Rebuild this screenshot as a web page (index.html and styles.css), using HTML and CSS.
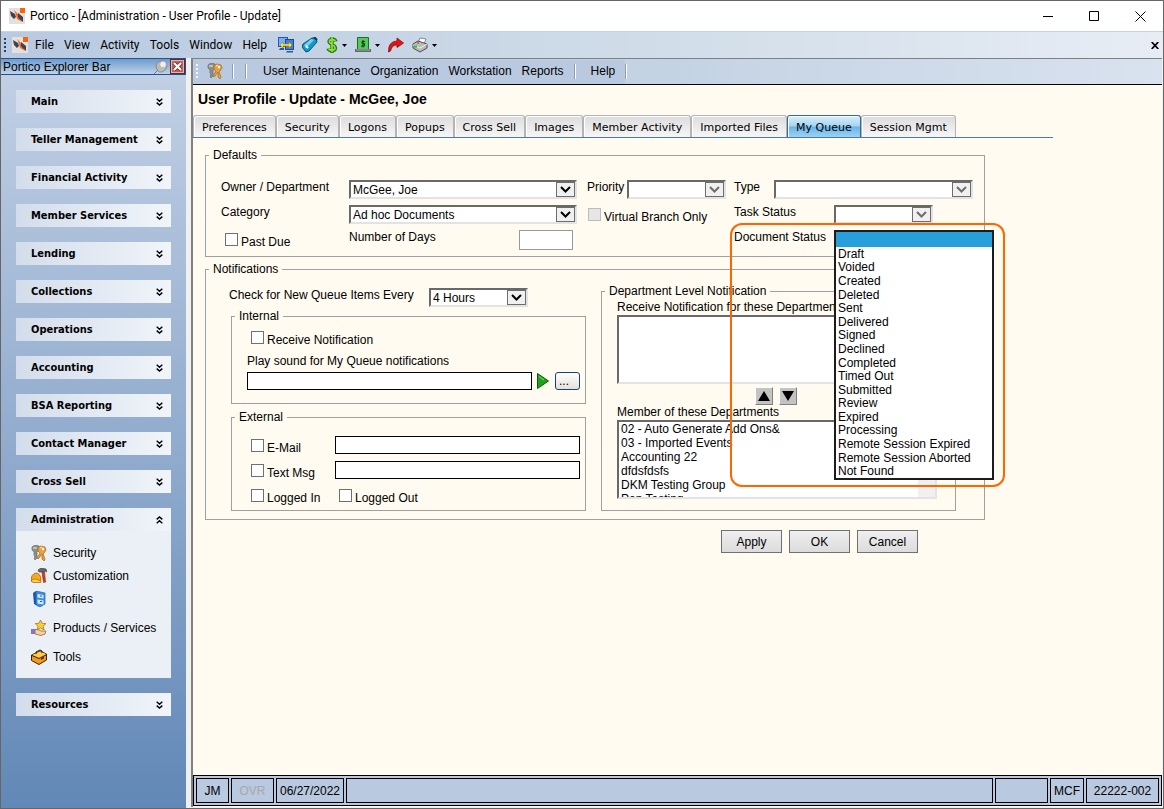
FILE: index.html
```html
<!DOCTYPE html>
<html lang="en">
<head>
<meta charset="utf-8">
<title>Portico - User Profile - Update</title>
<link rel="stylesheet" href="styles.css">
</head>
<body>
<svg class="defs" aria-hidden="true">
  <symbol id="logo" viewBox="0 0 16 16">
    <rect width="16" height="16" fill="#e4e0dd"/>
    <path d="M1 3l5 3 1 3-2 2-3-3zM9 5l5 4v5l-5-4z" fill="#3c4452"/>
    <path d="M5 2l4 4v3l4 5-5-3-1-4z" fill="#f36a21"/>
    <rect x="11" width="5" height="5" fill="#ff6200"/>
  </symbol>
  <symbol id="keys" viewBox="0 0 16 16">
    <path d="M1 2l3-2 4 1v4L6 7v6l-2 2-1-2 1-1-1-2V7L1 5z" fill="#8e8e8e" stroke="#6c6c6c" stroke-width=".7"/>
    <path d="M2 3h4" stroke="#eee"/>
    <path d="M7 2l3-1 4 1 1 3-2 3-1 1 2 5-1 2-2-2V9L8 13l-1 1-1-1 3-5-2-2z" fill="#e9a13b" stroke="#a5641c" stroke-width=".7"/>
    <path d="M9 3l2-1" stroke="#fff3c8"/>
    <circle cx="12" cy="4" r="1.2" fill="#fff"/>
  </symbol>
  <symbol id="down2" viewBox="0 0 7 8"><path d="M.7.8l2.8 2.4L6.300.8M.7 4.600l2.800 2.400 2.800-2.400" fill="none" stroke="#000" stroke-width="1.500"/></symbol>
  <symbol id="caret" viewBox="0 0 5 3"><path d="M0 0h5L2.500 3z" fill="#000"/></symbol>
  <symbol id="chev" viewBox="0 0 11 7"><path d="M1 1l4.500 4.500L10 1" fill="none" stroke="currentColor" stroke-width="2"/></symbol>
</svg>

<div class="window">
  <header class="titlebar">
    <svg class="i16"><use href="#logo"/></svg>
    <h1>Portico - [Administration - User Profile - Update]</h1>
    <div class="winbtns">
      <button type="button" aria-label="Minimize"><svg viewBox="0 0 11 11"><path d="M0 5.500h10" stroke="#000"/></svg></button>
      <button type="button" aria-label="Maximize"><svg viewBox="0 0 11 11"><path d="M.5.5h9v9h-9z" fill="none" stroke="#000"/></svg></button>
      <button type="button" aria-label="Close"><svg viewBox="0 0 11 11"><path d="M.5.5l10 10m0-10l-10 10" stroke="#000"/></svg></button>
    </div>
  </header>

  <nav class="menubar">
    <span class="grip"></span>
    <svg class="i16 menulogo"><use href="#logo"/></svg>
    <div class="menus">
      <button type="button">File</button><button type="button">View</button><button type="button">Activity</button><button type="button">Tools</button><button type="button">Window</button><button type="button">Help</button>
    </div>
    <div class="tools">
      <button type="button" aria-label="Connect"><svg viewBox="0 0 16 16"><rect x=".5" y=".5" width="9" height="9" fill="#6fb4f5" stroke="#2b55a8"/><rect x="7.500" y="2.500" width="8" height="10" fill="#3d7fd8" stroke="#23468c"/><path d="M2 11h4v2H1zM9 14h6v1.500H8z" fill="#35559b"/><path d="M2 8l3-3v2h6V5l3 3-3 3V9H5v2z" fill="#ffe04a" stroke="#a88808" stroke-width=".6"/></svg></button>
      <button type="button" aria-label="Tag"><svg viewBox="0 0 16 16"><path d="M10 1l4 0 1 4-8 9-3 1-4-5 1-3z" fill="#1497c9" stroke="#07506f"/><path d="M2 8l7-6 3 1-8 8z" fill="#70d3f3"/><path d="M4 9l2 2" stroke="#fff" stroke-width="2"/><path d="M12 0l3 3" stroke="#123c52" stroke-width="2"/></svg></button>
      <button type="button" aria-label="Currency"><svg class="money" viewBox="0 0 12 16"><path d="M10 4.500C9 1.500 3 1.500 3 4.500S9.500 7.500 9.500 11 3 14.500 2 11.500M6 0v16" fill="none" stroke="#2d7d12" stroke-width="3.400"/><path d="M9.500 4.500C8.500 2 3.500 2 3.500 4.500S9 8 9 11s-5 3-6.500.5M6 0v15" fill="none" stroke="#8ce33d" stroke-width="1.600"/></svg><svg class="caret"><use href="#caret"/></svg></button>
      <button type="button" aria-label="Cash"><svg viewBox="0 0 16 16"><path d="M2.500.5h11v12h-11z" fill="#55c95b" stroke="#1e6e28"/><path d="M0 12h16v3H0z" fill="#666"/><path d="M1 13h14" stroke="#aaa"/><path d="M10 4.500H7v2h2.500v2.500H6M8 3v7.500" fill="none" stroke="#083d0f"/></svg><svg class="caret"><use href="#caret"/></svg></button>
      <button type="button" aria-label="Go"><svg viewBox="0 0 16 16"><path d="M9 1l6.500 5L9 10.500V8Q4 7.500 2.500 14L.5 15Q0 4.500 9 4z" fill="#e31414" stroke="#8d0808" stroke-width=".8"/></svg></button>
      <button type="button" aria-label="Print"><svg viewBox="0 0 16 16"><path d="M8 1l6 1-2 5-6-1z" fill="#fff" stroke="#666" stroke-width=".7"/><path d="M1 7l5-3 9 3v4l-7 4-7-4z" fill="#bcbcbc" stroke="#4d4d4d"/><path d="M1 8l7 3 7-4" fill="none" stroke="#eee"/><path d="M2 9.500h3" stroke="#22c52c" stroke-width="2"/><path d="M5 6h2" stroke="#d22"/></svg><svg class="caret"><use href="#caret"/></svg></button>
    </div>
    <button type="button" class="mdiclose" aria-label="Close document"><svg viewBox="0 0 8 7"><path d="M.7 0l6.600 7M7.300 0L.7 7" stroke="#000" stroke-width="1.700"/></svg></button>
  </nav>

  <div class="work">
    <aside class="side">
      <div class="sidehead"><h2>Portico Explorer Bar</h2>
        <svg class="pin" viewBox="0 0 14 14"><path d="M0 14l5-5" stroke="#777"/><path d="M2 4q2-2 5-3 6-1 6 5-1 5-5 6-6 1-6-8z" fill="#bbb" stroke="#808080" stroke-width=".8"/><circle cx="9" cy="4.500" r="3.200" fill="#eee" stroke="#aaa" stroke-width=".6"/></svg>
        <button type="button" aria-label="Close bar"><svg viewBox="0 0 15 15"><rect x=".5" y=".5" width="14" height="14" fill="#b96462" stroke="#5b2b2b"/><rect x="1.500" y="1.500" width="12" height="12" fill="none" stroke="#e4b5b0"/><path d="M4 4l7 7m0-7l-7 7" stroke="#602522" stroke-width="3.600"/><path d="M4 4l7 7m0-7l-7 7" stroke="#fff" stroke-width="2.200"/></svg></button>
      </div>
      <div class="groups">
        <button type="button" class="group">Main<svg><use href="#down2"/></svg></button>
        <button type="button" class="group">Teller Management<svg><use href="#down2"/></svg></button>
        <button type="button" class="group">Financial Activity<svg><use href="#down2"/></svg></button>
        <button type="button" class="group">Member Services<svg><use href="#down2"/></svg></button>
        <button type="button" class="group">Lending<svg><use href="#down2"/></svg></button>
        <button type="button" class="group">Collections<svg><use href="#down2"/></svg></button>
        <button type="button" class="group">Operations<svg><use href="#down2"/></svg></button>
        <button type="button" class="group">Accounting<svg><use href="#down2"/></svg></button>
        <button type="button" class="group">BSA Reporting<svg><use href="#down2"/></svg></button>
        <button type="button" class="group">Contact Manager<svg><use href="#down2"/></svg></button>
        <button type="button" class="group">Cross Sell<svg><use href="#down2"/></svg></button>
        <div>
          <button type="button" class="group open">Administration<svg><use href="#down2"/></svg></button>
          <div class="links">
            <a href="#security"><svg class="i16"><use href="#keys"/></svg>Security</a>
            <a href="#customization"><svg class="i16" viewBox="0 0 16 16"><path d="M0 13q0-7 5-8 4 0 5 6l-1 3H2z" fill="#f9a915" stroke="#a85b06" stroke-width=".8"/><path d="M0 12l4-1 6 2v1.500H2z" fill="#ffd24b" stroke="#8a4b05" stroke-width=".5"/><path d="M7 2l3-2 5 1 1 3-2-1-2 1H8z" fill="#666" stroke="#333" stroke-width=".6"/><path d="M11 4h2.500l1 10-2 .5z" fill="#dd3a1e" stroke="#82230f" stroke-width=".6"/></svg>Customization</a>
            <a href="#profiles"><svg class="i16" viewBox="0 0 16 16"><path d="M2 2l3-2v14l-2-1z" fill="#1756b0"/><path d="M5 0l9 2v11l-5 3-4-2z" fill="#3b8fe5" stroke="#245fa8" stroke-width=".7"/><path d="M6.500 3l6 1v3.500l-6-1zM6.500 8.500l6 1v4l-6-1z" fill="#cfe7fb"/><path d="M9 5h2M9 10.500h2" stroke="#245fa8"/></svg>Profiles</a>
            <a href="#products" class="apart"><svg class="i16" viewBox="0 0 16 16"><path d="M9.500 0l1.600 3.300 3.900.3-2.800 2.600.9 3.800-3.600-2-3.400 2L7 6.200 4.200 3.600l3.700-.3z" fill="#f8cd35" stroke="#9a6f0b" stroke-width=".7"/><path d="M0 9h4v5H0z" fill="#8672d8"/><path d="M4 9.500h3l3 1.500h5l-1 3-4 1.500-6-1.500z" fill="#f7cf9c" stroke="#9c693a" stroke-width=".8"/></svg>Products / Services</a>
            <a href="#tools" class="apart"><svg class="i16" viewBox="0 0 16 16"><path d="M.5 6L9 2l6.500 3v6L8 15.500.5 11.500z" fill="#f39a16" stroke="#3b2103"/><path d="M1 6l8-3.500L15 5 8 9z" fill="#ffcb45"/><path d="M1 6.500l7 3L15 6" fill="none" stroke="#3b2103"/><path d="M5 5V3l4-2 2 1v2" fill="none" stroke="#2d1a04"/><path d="M10 9l3-1.500v2L10 11z" fill="#5b3508"/></svg>Tools</a>
          </div>
        </div>
        <button type="button" class="group">Resources<svg><use href="#down2"/></svg></button>
      </div>
    </aside>

    <main class="doc">
      <nav class="toolbar">
        <div class="strip">
          <span class="grip light"></span>
          <button type="button" class="keybtn" aria-label="Security"><svg class="i16"><use href="#keys"/></svg></button>
          <span class="sep"></span><span class="sep second"></span>
          <button type="button">User Maintenance</button><button type="button">Organization</button><button type="button">Workstation</button><button type="button">Reports</button>
          <span class="sep third"></span>
          <button type="button">Help</button>
        </div>
        <span class="sep"></span>
      </nav>
      <div class="page">
        <h2 class="heading">User Profile - Update - McGee, Joe</h2>
        <div class="tabs" role="tablist">
          <button type="button" role="tab">Preferences</button><button type="button" role="tab">Security</button><button type="button" role="tab">Logons</button><button type="button" role="tab">Popups</button><button type="button" role="tab">Cross Sell</button><button type="button" role="tab">Images</button><button type="button" role="tab">Member Activity</button><button type="button" role="tab">Imported Files</button><button type="button" role="tab" aria-selected="true" class="on">My Queue</button><button type="button" role="tab">Session Mgmt</button>
        </div>

        <form class="form">
          <fieldset class="defaults">
            <legend>Defaults</legend>
            <div class="row">
              <div class="cols colA">
                <label for="owner">Owner / Department</label>
                <span class="drop"><select id="owner"><option>McGee, Joe</option></select><svg><use href="#chev"/></svg></span>
                <label for="cat">Category</label>
                <span class="drop"><select id="cat"><option>Ad hoc Documents</option></select><svg><use href="#chev"/></svg></span>
                <label class="check"><input type="checkbox">Past Due</label>
                <div class="days"><label for="days">Number of Days</label><input id="days" type="text"></div>
              </div>
              <div class="cols colB">
                <label for="prio">Priority</label>
                <span class="drop off"><select id="prio" disabled><option></option></select><svg><use href="#chev"/></svg></span>
                <label class="check full"><input type="checkbox" disabled>Virtual Branch Only</label>
              </div>
              <div class="colC">
                <div class="pair type"><label for="type">Type</label>
                <span class="drop off"><select id="type" disabled><option></option></select><svg><use href="#chev"/></svg></span></div>
                <div class="pair"><label for="task">Task Status</label>
                <span class="drop off"><select id="task" disabled><option></option></select><svg><use href="#chev"/></svg></span></div>
                <div class="status"><span id="dslabel">Document Status</span>
                  <ul class="popup" role="listbox" aria-labelledby="dslabel">
                    <li role="option" aria-selected="true" class="sel"></li>
                    <li role="option">Draft</li><li role="option">Voided</li><li role="option">Created</li><li role="option">Deleted</li><li role="option">Sent</li><li role="option">Delivered</li><li role="option">Signed</li><li role="option">Declined</li><li role="option">Completed</li><li role="option">Timed Out</li><li role="option">Submitted</li><li role="option">Review</li><li role="option">Expired</li><li role="option">Processing</li><li role="option">Remote Session Expired</li><li role="option">Remote Session Aborted</li><li role="option">Not Found</li>
                  </ul>
                  <span class="callout"></span>
                </div>
              </div>
            </div>
          </fieldset>

          <fieldset class="notes">
            <legend>Notifications</legend>
            <div class="halves">
              <div class="left">
                <div class="every"><label for="every">Check for New Queue Items Every</label>
                <span class="drop"><select id="every"><option>4 Hours</option></select><svg><use href="#chev"/></svg></span></div>
                <fieldset class="internal">
                  <legend>Internal</legend>
                  <label class="check"><input type="checkbox">Receive Notification</label>
                  <label for="sound" class="soundlabel">Play sound for My Queue notifications</label>
                  <div class="sound">
                    <input id="sound" class="box" type="text">
                    <button type="button" class="play" aria-label="Play"><svg viewBox="0 0 12 16"><path d="M.5.5L11.500 8 .5 15.500z" fill="#1fa31c" stroke="#0c5a0c"/><path d="M2 3.500L7 7" stroke="#7be26b"/></svg></button>
                    <button type="button" class="browse">...</button>
                  </div>
                </fieldset>
                <fieldset class="external">
                  <legend>External</legend>
                  <div class="ext"><label class="check"><input type="checkbox">E-Mail</label><input class="box" type="text" aria-label="E-Mail address"></div>
                  <div class="ext"><label class="check"><input type="checkbox">Text Msg</label><input class="box" type="text" aria-label="Text message address"></div>
                  <div class="ext"><label class="check"><input type="checkbox">Logged In</label><label class="check"><input type="checkbox">Logged Out</label></div>
                </fieldset>
              </div>
              <fieldset class="dept">
                <legend>Department Level Notification</legend>
                <label for="recv" class="clip">Receive Notification for these Departmen</label>
                <select id="recv" class="list recv" multiple></select>
                <div class="movers">
                  <button type="button" aria-label="Move up"><svg viewBox="0 0 12 10"><path d="M0 10L6 0l6 10z"/></svg></button>
                  <button type="button" aria-label="Move down"><svg viewBox="0 0 12 10"><path d="M0 0l6 10 6-10z"/></svg></button>
                </div>
                <label for="member">Member of these Departments</label>
                <div class="list member">
                  <select id="member" multiple><option>02 - Auto Generate Add Ons&amp;</option><option>03 - Imported Events</option><option>Accounting 22</option><option>dfdsfdsfs</option><option>DKM Testing Group</option><option>Pen Testing</option></select>
                  <span class="track"></span>
                </div>
              </fieldset>
            </div>
          </fieldset>

          <div class="actions">
            <button type="button">Apply</button><button type="submit">OK</button><button type="button">Cancel</button>
          </div>
        </form>
      </div>
      <footer class="statusbar">
        <span class="user">JM</span><span class="ovr">OVR</span><span class="date">06/27/2022</span><span class="fill"></span><span class="spare"></span><span class="mcf">MCF</span><span class="num">22222-002</span>
      </footer>
    </main>
  </div>
</div>
</body>
</html>
```
FILE: styles.css
```css
* { box-sizing: border-box; }
body { margin: 0; font: 12px/14px "Liberation Sans", Arial, sans-serif; color: #000; }
button, input, select { font: inherit; color: inherit; margin: 0; padding: 0; border: 0; background: none; border-radius: 0; }
h1, h2, ul { margin: 0; padding: 0; font-size: 12px; font-weight: normal; }
fieldset { margin: 0; padding: 0; border: 1px solid #a0a0a0; min-width: 0; }
legend { margin-left: 3px; padding: 0 4px; }
svg { display: block; flex: none; }
.defs { position: absolute; width: 0; height: 0; }
.i16 { width: 16px; height: 16px; }

.window { display: flex; flex-direction: column; min-height: 100vh; border: 1px solid #666; background: #f0f0f0; }

.titlebar { display: flex; align-items: center; height: 30px; padding-left: 8px; background: #fff; }
.titlebar h1 { margin-left: 5px; font: 12px/16px Roboto, "Open Sans", sans-serif; }
.winbtns { display: flex; margin-left: auto; }
.winbtns button { display: grid; place-items: center; width: 46px; height: 29px; }
.winbtns svg { width: 11px; height: 11px; }

.menubar { display: flex; align-items: center; height: 27px; border-top: 1px solid #bcd6ee; background: linear-gradient(90deg, #b8c9e0, #d2dee9 60%, #e8edf5); font: 12px/16px Roboto, "Open Sans", sans-serif; }
.grip { width: 3px; height: 15px; margin-left: 3px; background: repeating-linear-gradient(#27406f 0 2px, transparent 2px 4px); background-size: 2px 100%; background-repeat: no-repeat; }
.grip.light { background: repeating-linear-gradient(#f4f7fb 0 2px, transparent 2px 4px); background-size: 2px 100%; background-repeat: no-repeat; }
.menulogo { margin-left: 5px; }
.menus { display: flex; justify-content: space-between; width: 232px; margin-left: 7px; }
.tools { display: flex; gap: 8px; margin-left: 11px; }
.tools button { display: flex; align-items: center; gap: 4px; }
.tools svg { width: 16px; height: 16px; }
.tools .money { width: 12px; }
.tools .caret { width: 5px; height: 3px; }
.mdiclose { margin: 0 4px 0 auto; }
.mdiclose svg { width: 8px; height: 7px; }

.work { display: flex; flex: 1; }
.side { width: 185px; flex: none; background: linear-gradient(#c3d1e5, #6288b7); }
.sidehead { display: flex; align-items: center; height: 17px; border: 1px solid #24528c; border-left: 0; background: linear-gradient(#6f9ccc, #bdd3ea); }
.sidehead h2 { flex: 1; padding-left: 2px; white-space: nowrap; }
.pin { width: 14px; height: 14px; margin-right: 2px; }
.sidehead button svg { width: 15px; height: 15px; }
.groups { display: flex; flex-direction: column; gap: 15px; padding: 15px; }
.group { display: flex; align-items: center; width: 100%; height: 23px; padding: 0 8px 0 15px; background: linear-gradient(90deg, #d3ddeb, #f1f5fa); font: bold 11px/14px "DejaVu Sans Condensed", Tahoma, sans-serif; }
.group svg { width: 7px; height: 8px; margin-left: auto; }
.group.open svg { transform: rotate(180deg); }
.links { display: flex; flex-direction: column; height: 147px; padding: 10px 8px 10px 15px; background: #eaf0f5; }
.links a { display: flex; align-items: center; gap: 6px; height: 23px; color: #000; text-decoration: none; white-space: nowrap; }
.links .apart { margin-top: 6px; }

.doc { display: flex; flex-direction: column; flex: 1; min-width: 0; margin: 0 1px 1px 5px; border: solid #808080; border-width: 1px 0 0 2px; background: #fffbf0; }
.toolbar { display: flex; align-items: center; height: 26px; border-bottom: 1px solid #000; background: linear-gradient(90deg, #b8c9e0, #c4d3e4 50%, #d9e2ef); }
.strip { display: flex; align-items: center; height: 24px; background: #b9c9e0; }
.strip button { margin-right: 10px; line-height: 16px; padding-bottom: 2px; }
.strip .keybtn { margin: 0 9px 0 8px; }
.sep { width: 2px; height: 15px; border-left: 1px solid #8d9db5; border-right: 1px solid #fff; }
.sep.second { margin: 0 16px 0 11px; }
.sep.third { margin: 0 15px 0 0; }

.page { flex: 1; }
.heading { padding: 6px 0 0 5px; font: bold 14px/16px "Liberation Sans", Arial, sans-serif; }
.tabs { display: flex; width: 860px; max-width: 100%; margin-top: 8px; border-bottom: 1px solid #4a7ba6; }
.tabs button { height: 22px; padding: 2px 8px 0; border: solid #b4b4b4; border-width: 1px 1px 0; border-radius: 3px 3px 0 0; box-shadow: inset 1px 1px #fff; background: linear-gradient(#dcdcdc, #f6f6f6); font: 11px/14px "DejaVu Sans", Verdana, sans-serif; white-space: nowrap; }
.tabs .on { border-color: #2f6ba0; background: linear-gradient(#d8eefb 0, #a5d4f2 48%, #6ab4e6 52%, #9bd2f5); }

.form { width: 780px; margin: 10px 0 0 12px; }
.row { display: flex; padding: 18px 0 1px 15px; }
.cols { display: grid; grid-auto-rows: 25px; align-items: start; }
.colA { grid-template-columns: 128px 228px; margin-right: 10px; }
.colB { grid-template-columns: 40px 99px; align-content: start; margin-right: 8px; }
.full { grid-column: 1 / -1; }
.colC { flex: 1; }
.pair { display: grid; grid-template-columns: 100px 99px; height: 25px; align-items: start; }
.pair.type { grid-template-columns: 40px 199px; }
.drop { display: grid; height: 19px; border: 2px solid #e3e3e3; border-top-color: #696969; border-left-color: #696969; background: #fff; }
.drop select { grid-area: 1 / 1; height: 15px; padding: 1px 0 0 2px; appearance: none; line-height: 14px; opacity: 1; }
.drop svg { grid-area: 1 / 1; justify-self: end; width: 19px; height: 15px; padding: 3px; border: 1px solid #6d6d6d; background: #f0f0f0; pointer-events: none; }
.drop.off svg { color: #6d6d6d; }
.check { display: flex; white-space: nowrap; line-height: 14px; padding-top: 5px; }
input[type="checkbox"] { appearance: none; width: 13px; height: 13px; margin: -2px 3px 0 4px; border: 1px solid #707070; background: #fff; }
input[type="checkbox"]:disabled { border-color: #bcbcbc; background: #e6e6e6; }
.colB input[type="checkbox"] { margin-left: 1px; }
.days { display: flex; align-items: start; }
.days label { width: 170px; }
.days input { width: 54px; height: 20px; border: 1px solid #999; background: #fff; }
.status { position: relative; }
.popup { position: absolute; z-index: 2; left: 100px; top: 0; display: grid; grid-template-rows: 15px repeat(17, 1fr); width: 160px; height: 250px; border: 2px solid #1c1c1c; background: #fff; list-style: none; }
.popup li { display: flex; align-items: center; padding-left: 2px; min-height: 0; }
.popup .sel { background: #269fdb; }
.callout { position: absolute; z-index: 3; left: -4px; top: -7px; width: 275px; height: 264px; border: 2px solid #ff6600; border-radius: 12px; pointer-events: none; }

.notes { margin-top: 5px; }
.halves { display: flex; gap: 15px; padding: 8px 28px 8px 25px; }
.left { width: 355px; }
.every { display: grid; grid-template-columns: 200px 99px; margin: 4px 0 0 -2px; }
.halves legend { margin-left: -12px; }
.internal { margin-top: 2px; padding: 0 5px 13px 15px; }
.internal legend + .check { margin-top: 5px; }
.external { margin-top: 6px; padding: 0 5px 0 15px; }
.soundlabel { display: block; margin-top: 7px; }
.sound { display: flex; align-items: center; margin-top: 4px; }
.sound .box { flex: 1; }
.box { height: 18px; border: 1px solid #000; background: #fff; }
.play { margin: 0 6px 0 5px; }
.play svg { width: 12px; height: 16px; }
.browse { width: 25px; height: 18px; border: 1px solid #1c3f70; border-radius: 3px; background: linear-gradient(#fff, #e2e0d8); text-align: left; padding-left: 3px; }
.ext { display: grid; grid-template-columns: 88px 1fr; height: 25px; align-items: start; }
.ext .check { padding-top: 6px; }
.ext .box { margin-top: 1px; }
.external legend + .ext { margin-top: 11px; }
.dept { flex: 1; padding: 0 18px 9px 15px; }
.dept label { display: block; line-height: 15px; white-space: nowrap; }
.dept legend + label { margin-top: 2px; }
.list { border: 2px solid #e3e3e3; border-top-color: #696969; border-left-color: #696969; background: #fff; }
.recv { display: block; width: 100%; height: 69px; }
.movers { display: flex; justify-content: center; gap: 6px; margin: 3px 0 0 -2px; }
.movers button { display: grid; place-items: center; width: 18px; height: 18px; border: 1px solid #808080; border-top-color: #fff; border-left-color: #fff; background: #c3c3c3; }
.movers svg { width: 12px; height: 10px; }
.member { display: flex; height: 79px; }
.member select { flex: 1; height: 75px; overflow: hidden; }
.member option { min-height: 0; padding: 0 2px; line-height: 14px; }
.track { width: 17px; background: #f0f0f0; }

.actions { display: flex; gap: 7px; margin: 10px 0 0 516px; }
.actions button { width: 61px; height: 23px; border: 1px solid #707070; background: linear-gradient(#efefef, #dcdcdc); }

.statusbar { display: flex; gap: 2px; height: 31px; margin-bottom: 1px; padding: 2px; border: 1px solid #000; background: #b8c9e0; }
.statusbar span { display: grid; place-items: center; border: 1px solid #000; }
.statusbar .user { width: 33px; }
.statusbar .ovr { width: 43px; color: #a8a8a8; }
.statusbar .date { width: 68px; }
.statusbar .fill { flex: 1; }
.statusbar .spare { width: 53px; }
.statusbar .mcf { width: 34px; }
.statusbar .num { width: 73px; }
```
